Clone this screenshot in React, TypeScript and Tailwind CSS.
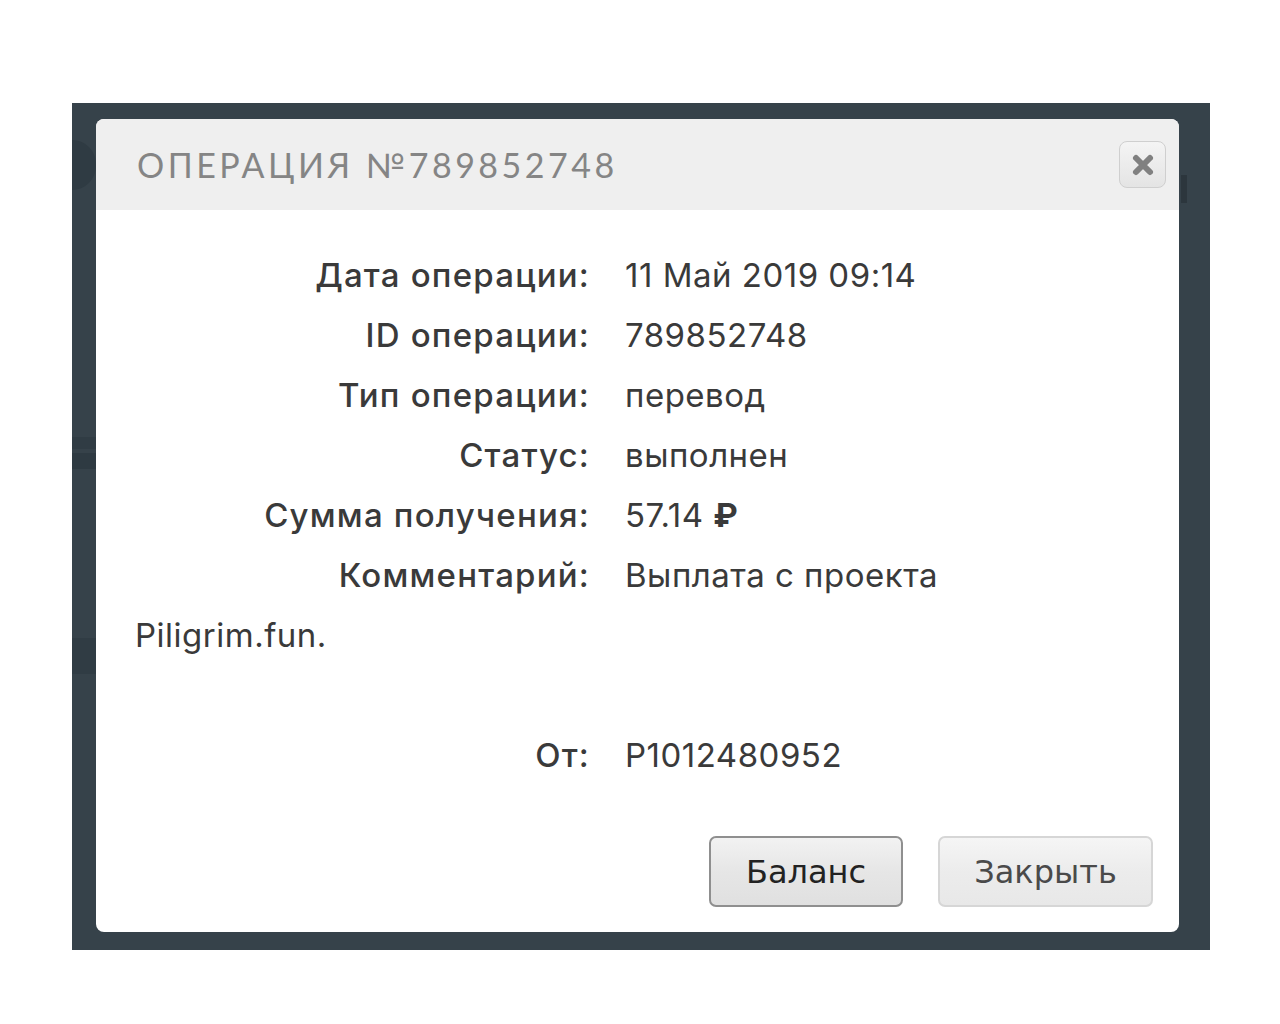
import React from "react";

const body = { fontFamily: "Inter, 'Open Sans', 'DejaVu Sans', sans-serif" };
const title = { fontFamily: "Lato, 'DejaVu Sans', sans-serif" };
const btn = { fontFamily: "'DejaVu Sans', Verdana, sans-serif" };

function Row({ label, value }: { label: string; value: React.ReactNode }) {
  return (
    <div className="flex h-[60px] items-center">
      <div className="w-[455px] shrink-0 text-right font-medium tracking-[1.2px] text-[#3a3a3a]">{label}</div>
      <div className="pl-[35px] tracking-[0.5px] text-[#3a3a3a]">{value}</div>
    </div>
  );
}

export default function App() {
  return (
    <div className="min-h-[1024px] w-full bg-white pt-[103px] pl-[72px]">
      <div className="relative h-[847px] w-[1138px] bg-[#36424a] pt-[16px] pl-[24px]">
        <div className="absolute left-[1109px] top-[72px] h-[28px] w-[6px] bg-[#2c363d]" />
        <div className="absolute left-0 top-[37px] h-[50px] w-[24px] rounded-r-full bg-[#2f3b43]" />
        <div className="absolute left-0 top-[334px] h-[12px] w-[24px] bg-[#303c44]" />
        <div className="absolute left-0 top-[350px] h-[16px] w-[24px] bg-[#2e3a42]" />
        <div className="absolute left-0 top-[535px] h-[36px] w-[24px] bg-[#303c44]" />
        <div className="flex h-[813px] w-[1083px] flex-col overflow-hidden rounded-[8px] bg-white">
          <div className="flex h-[91px] shrink-0 items-center justify-between bg-[#efefef] pl-[41px] pr-[13px]">
            <div style={title} className="text-[34px] font-normal tracking-[3.5px] text-[#858585]">
              ОПЕРАЦИЯ №789852748
            </div>
            <div className="flex h-[47px] w-[47px] items-center justify-center rounded-[8px] border border-[#cfcfcf] bg-gradient-to-b from-[#f4f4f4] to-[#e4e4e4]">
              <svg width="24" height="24" viewBox="0 0 24 24">
                <path d="M5 5 L19 19 M19 5 L5 19" stroke="#808080" strokeWidth="6" strokeLinecap="round" />
              </svg>
            </div>
          </div>
          <div style={body} className="flex flex-1 flex-col pl-[39px] pt-[35px] text-[33px] leading-[60px]">
            <Row label="Дата операции:" value="11 Май 2019 09:14" />
            <Row label="ID операции:" value="789852748" />
            <Row label="Тип операции:" value="перевод" />
            <Row label="Статус:" value="выполнен" />
            <Row
              label="Сумма получения:"
              value={
                <span>
                  57.14 <span className="font-bold">₽</span>
                </span>
              }
            />
            <Row label="Комментарий:" value="Выплата с проекта" />
            <div className="h-[60px] tracking-[0.5px] text-[#3a3a3a] leading-[60px]">Piligrim.fun.</div>
            <div className="h-[60px]" />
            <Row label="От:" value="P1012480952" />
            <div className="mt-auto flex justify-end gap-[35px] pb-[25px] pr-[26px]">
              <button
                style={btn}
                className="h-[71px] w-[194px] rounded-[7px] border-2 border-[#8f8f8f] bg-gradient-to-b from-[#f2f2f2] via-[#e6e6e6] to-[#e0e0e0] text-[32px] text-[#222]"
              >
                Баланс
              </button>
              <button
                style={btn}
                className="h-[71px] w-[215px] rounded-[7px] border-2 border-[#d6d6d6] bg-gradient-to-b from-[#f5f5f5] via-[#ececec] to-[#e8e8e8] text-[32px] text-[#4a4a4a]"
              >
                Закрыть
              </button>
            </div>
          </div>
        </div>
      </div>
    </div>
  );
}
